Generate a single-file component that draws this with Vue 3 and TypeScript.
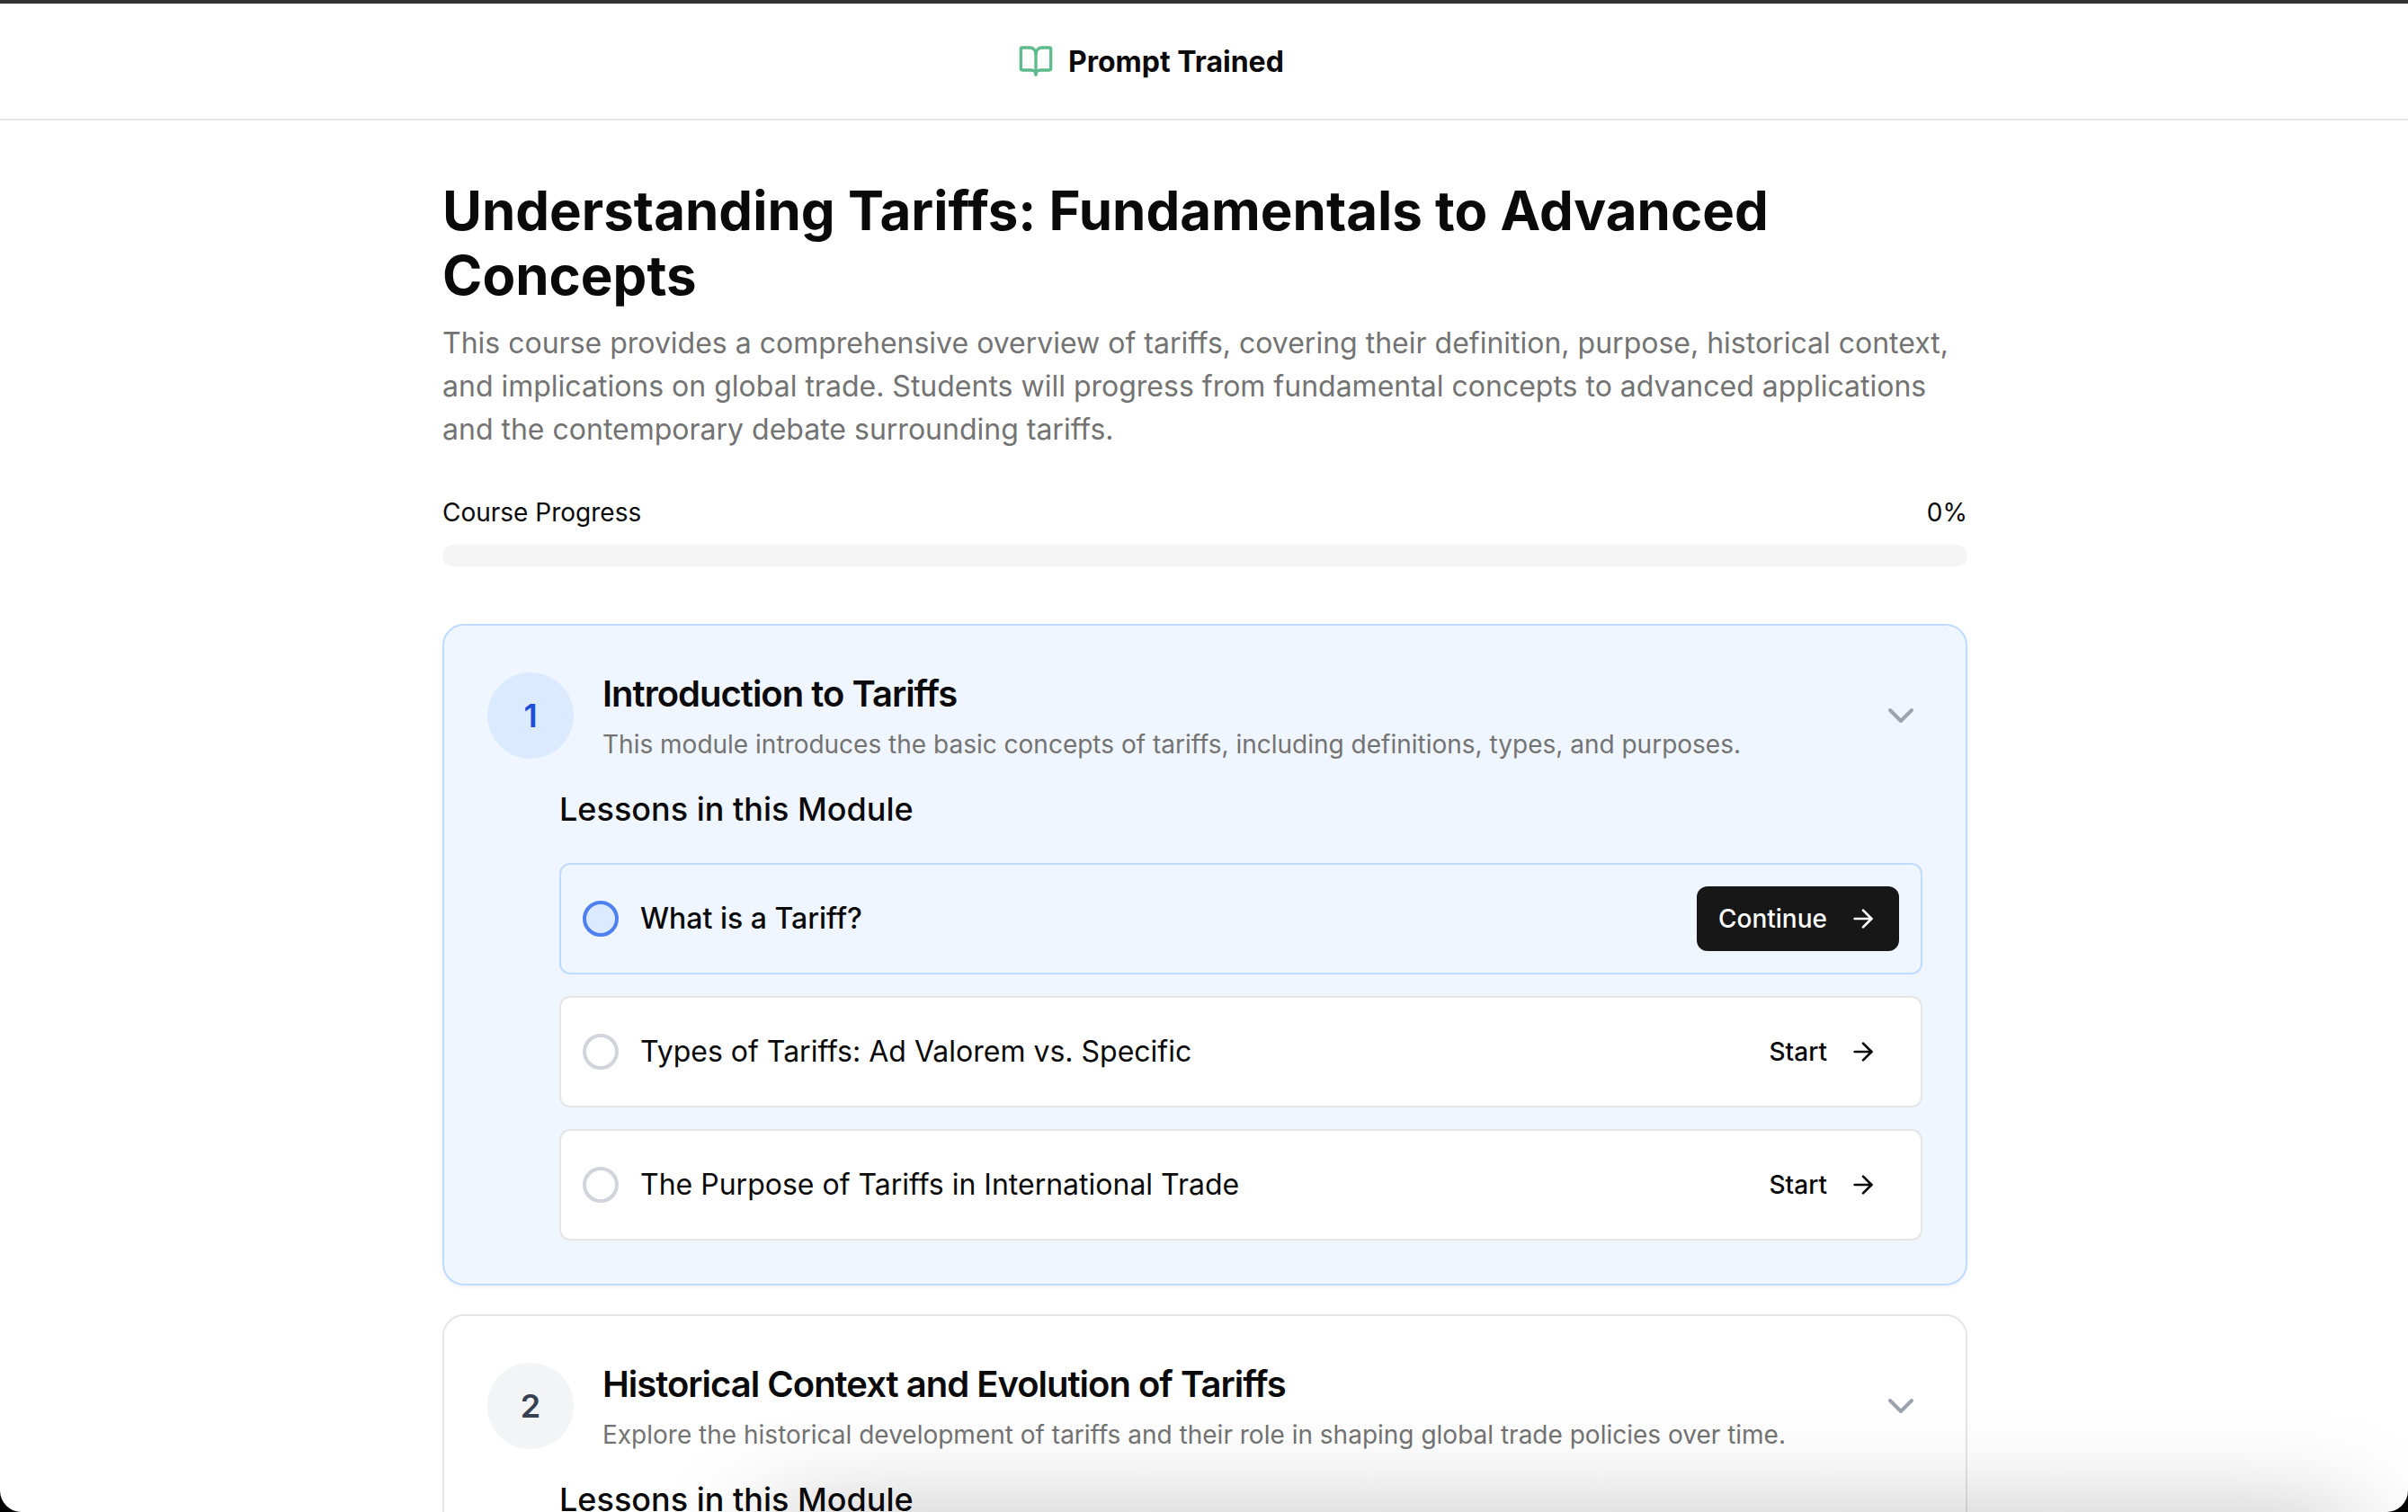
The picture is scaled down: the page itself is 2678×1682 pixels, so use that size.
<script setup lang="ts">
interface Lesson {
  title: string;
  action: string;
  current?: boolean;
}

interface Module {
  num: number;
  title: string;
  desc: string;
  active?: boolean;
  lessons: Lesson[];
}

const modules: Module[] = [
  {
    num: 1,
    title: 'Introduction to Tariffs',
    desc: 'This module introduces the basic concepts of tariffs, including definitions, types, and purposes.',
    active: true,
    lessons: [
      { title: 'What is a Tariff?', action: 'Continue', current: true },
      { title: 'Types of Tariffs: Ad Valorem vs. Specific', action: 'Start' },
      { title: 'The Purpose of Tariffs in International Trade', action: 'Start' },
    ],
  },
  {
    num: 2,
    title: 'Historical Context and Evolution of Tariffs',
    desc: 'Explore the historical development of tariffs and their role in shaping global trade policies over time.',
    lessons: [],
  },
];
</script>

<template>
  <div class="page">
    <header class="topbar">
      <svg class="logo" viewBox="0 0 24 24" fill="none" stroke="currentColor" stroke-width="2" stroke-linecap="round" stroke-linejoin="round">
        <path d="M12 7v14" />
        <path d="M3 18a1 1 0 0 1-1-1V4a1 1 0 0 1 1-1h5a4 4 0 0 1 4 4 4 4 0 0 1 4-4h5a1 1 0 0 1 1 1v13a1 1 0 0 1-1 1h-6a3 3 0 0 0-3 3 3 3 0 0 0-3-3z" />
      </svg>
      <span class="brand">Prompt Trained</span>
    </header>

    <main class="content">
      <h1>Understanding Tariffs: Fundamentals to Advanced Concepts</h1>
      <p class="intro">
        This course provides a comprehensive overview of tariffs, covering their definition, purpose, historical context, and implications on global trade. Students will progress from fundamental concepts to advanced applications and the contemporary debate surrounding tariffs.
      </p>

      <div class="progress-head">
        <span>Course Progress</span>
        <span>0%</span>
      </div>
      <div class="progress-bar"></div>

      <section v-for="mod in modules" :key="mod.num" class="module" :class="{ active: mod.active }">
        <div class="module-head">
          <div class="num">{{ mod.num }}</div>
          <div class="module-text">
            <h2>{{ mod.title }}</h2>
            <p>{{ mod.desc }}</p>
          </div>
          <svg class="chevron" viewBox="0 0 24 24" fill="none" stroke="currentColor" stroke-width="2" stroke-linecap="round" stroke-linejoin="round">
            <path d="m6 9 6 6 6-6" />
          </svg>
        </div>
        <div class="module-body">
          <h3>Lessons in this Module</h3>
          <ul class="lessons">
            <li v-for="lesson in mod.lessons" :key="lesson.title" class="lesson" :class="{ current: lesson.current }">
              <span class="dot"></span>
              <span class="lesson-title">{{ lesson.title }}</span>
              <button class="go">
                {{ lesson.action }}
                <svg viewBox="0 0 24 24" fill="none" stroke="currentColor" stroke-width="2" stroke-linecap="round" stroke-linejoin="round">
                  <path d="M5 12h14" />
                  <path d="m12 5 7 7-7 7" />
                </svg>
              </button>
            </li>
          </ul>
        </div>
      </section>
    </main>

    <!-- screenshot window edge -->
    <div class="shade"></div>
    <div class="edge"></div>
  </div>
</template>

<style scoped>
.page {
  position: relative;
  height: 1682px;
  overflow: hidden;
  background: #fff;
  color: #0a0a0a;
  font-family: Inter, "Noto Sans", sans-serif;
}

.topbar {
  display: flex;
  align-items: center;
  gap: 16px;
  height: 134px;
  box-sizing: border-box;
  padding: 4px 0 0 1132px;
  border-bottom: 2px solid #e5e5e5;
}

.logo {
  width: 40px;
  height: 40px;
  color: #5dbb8c;
}

.brand {
  padding-top: 1px;
  font-size: 32px;
  font-weight: 700;
  line-height: 48px;
}

.content {
  width: 1696px;
  margin-left: 492px;
  padding-top: 64px;
}

h1 {
  margin: 0 0 16px;
  font-size: 60px;
  line-height: 72px;
  font-weight: 700;
}

.intro {
  margin: 0 0 48px;
  font-size: 32px;
  line-height: 48px;
  color: #737373;
}

.progress-head {
  display: flex;
  justify-content: space-between;
  font-size: 28px;
  line-height: 40px;
}

.progress-bar {
  height: 24px;
  margin: 16px 0 64px;
  border-radius: 12px;
  background: #f5f5f5;
}

.module {
  box-sizing: border-box;
  margin-bottom: 32px;
  padding: 48px;
  border: 2px solid #e5e5e5;
  border-radius: 24px;
  background: #fff;
}

.module.active {
  border-color: #bfdbfe;
  background: #eff6ff;
  box-shadow: 0 2px 4px rgba(0, 0, 0, 0.05);
}

.module-head {
  display: flex;
  align-items: center;
  gap: 32px;
}

.num {
  display: flex;
  align-items: center;
  justify-content: center;
  flex: none;
  width: 96px;
  height: 96px;
  border-radius: 50%;
  background: #f3f4f6;
  color: #374151;
  font-size: 36px;
  font-weight: 600;
}

.active .num {
  background: #dbeafe;
  color: #1d4ed8;
}

.module-text {
  flex: 1;
}

h2 {
  margin: 0 0 8px;
  font-size: 40px;
  line-height: 56px;
  font-weight: 600;
  letter-spacing: -1px;
}

.module-text p {
  margin: 0;
  font-size: 28px;
  line-height: 40px;
  color: #737373;
}

.chevron {
  flex: none;
  width: 48px;
  height: 48px;
  color: #9ca3af;
}

.module-body {
  margin: 24px 0 0 80px;
}

h3 {
  margin: 0 0 32px;
  font-size: 36px;
  line-height: 56px;
  font-weight: 500;
}

.lessons {
  display: flex;
  flex-direction: column;
  gap: 24px;
  margin: 0;
  padding: 0;
  list-style: none;
}

.lesson {
  display: flex;
  align-items: center;
  gap: 24px;
  padding: 24px;
  border: 2px solid #e5e5e5;
  border-radius: 12px;
  background: #fff;
}

.lesson.current {
  border-color: #bfdbfe;
  background: #eff6ff;
}

.dot {
  flex: none;
  box-sizing: border-box;
  width: 40px;
  height: 40px;
  border: 4px solid #d1d5db;
  border-radius: 50%;
}

.current .dot {
  border-color: #4f80f0;
  background: #dbeafe;
}

.lesson-title {
  flex: 1;
  font-size: 32px;
  line-height: 48px;
}

.current .lesson-title {
  font-weight: 500;
}

.go {
  display: flex;
  align-items: center;
  gap: 24px;
  height: 72px;
  padding: 0 24px;
  border: 0;
  border-radius: 12px;
  background: transparent;
  color: #0a0a0a;
  font-family: inherit;
  font-size: 28px;
  font-weight: 500;
}

.go svg {
  width: 32px;
  height: 32px;
}

.current .go {
  background: #171717;
  color: #fff;
}

.shade {
  position: absolute;
  left: 850px;
  right: 60px;
  top: 1692px;
  height: 100px;
  box-shadow: 0 0 120px rgba(0, 0, 0, 0.28);
  pointer-events: none;
}

.edge {
  position: absolute;
  inset: 0;
  border-top: 4px solid #333;
  border-radius: 0 0 24px 24px;
  box-shadow: 0 0 0 40px #000;
  pointer-events: none;
}
</style>

<style>
body {
  background: #000;
}
</style>
